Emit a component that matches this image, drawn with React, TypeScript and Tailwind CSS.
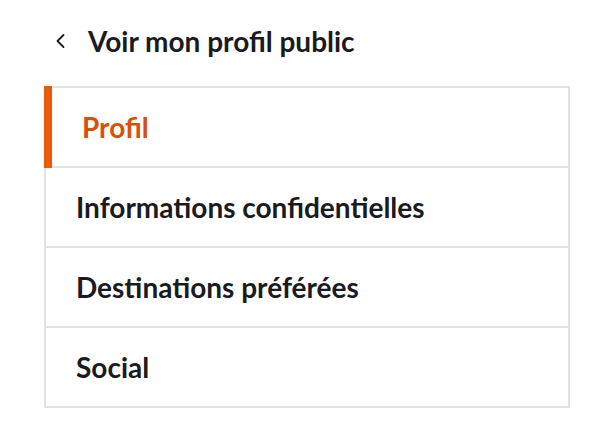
import React from "react";

const items = [
  { label: "Profil", active: true },
  { label: "Informations confidentielles", active: false },
  { label: "Destinations préférées", active: false },
  { label: "Social", active: false },
];

export default function App() {
  return (
    <div
      className="w-[608px] h-[434px] bg-white text-[#1a1b1e]"
      style={{ fontFamily: "Lato, 'Noto Sans', sans-serif" }}
    >
      <div className="pl-[44px] pt-[24px]">
        <div className="flex items-center h-[34px]">
          <svg
            width="12"
            height="18"
            viewBox="0 0 12 18"
            className="ml-[11px] mr-[21px]"
            fill="none"
            stroke="#1a1b1e"
            strokeWidth="1.8"
            strokeLinecap="round"
            strokeLinejoin="round"
          >
            <path d="M8.5 3 L2.5 9 L8.5 15" />
          </svg>
          <span className="text-[28px] font-bold leading-none">Voir mon profil public</span>
        </div>
        <div className="mt-[28px] w-[526px] border-2 border-[#e2e2e2]">
          {items.map((it, i) => (
            <div
              key={it.label}
              className={
                "box-content h-[78px] flex items-center " +
                (i < items.length - 1 ? "border-b-2 border-[#e2e2e2]" : "")
              }
            >
              <div
                className={
                  "flex items-center " +
                  (it.active
                    ? "-ml-[2px] -mt-[2px] -mb-[2px] h-[82px] border-l-[8px] border-[#ea5a0b] pl-[30px] text-[#d9500b]"
                    : "h-full pl-[30px]")
                }
              >
                <span className="text-[28px] font-bold leading-none">{it.label}</span>
              </div>
            </div>
          ))}
        </div>
      </div>
    </div>
  );
}
